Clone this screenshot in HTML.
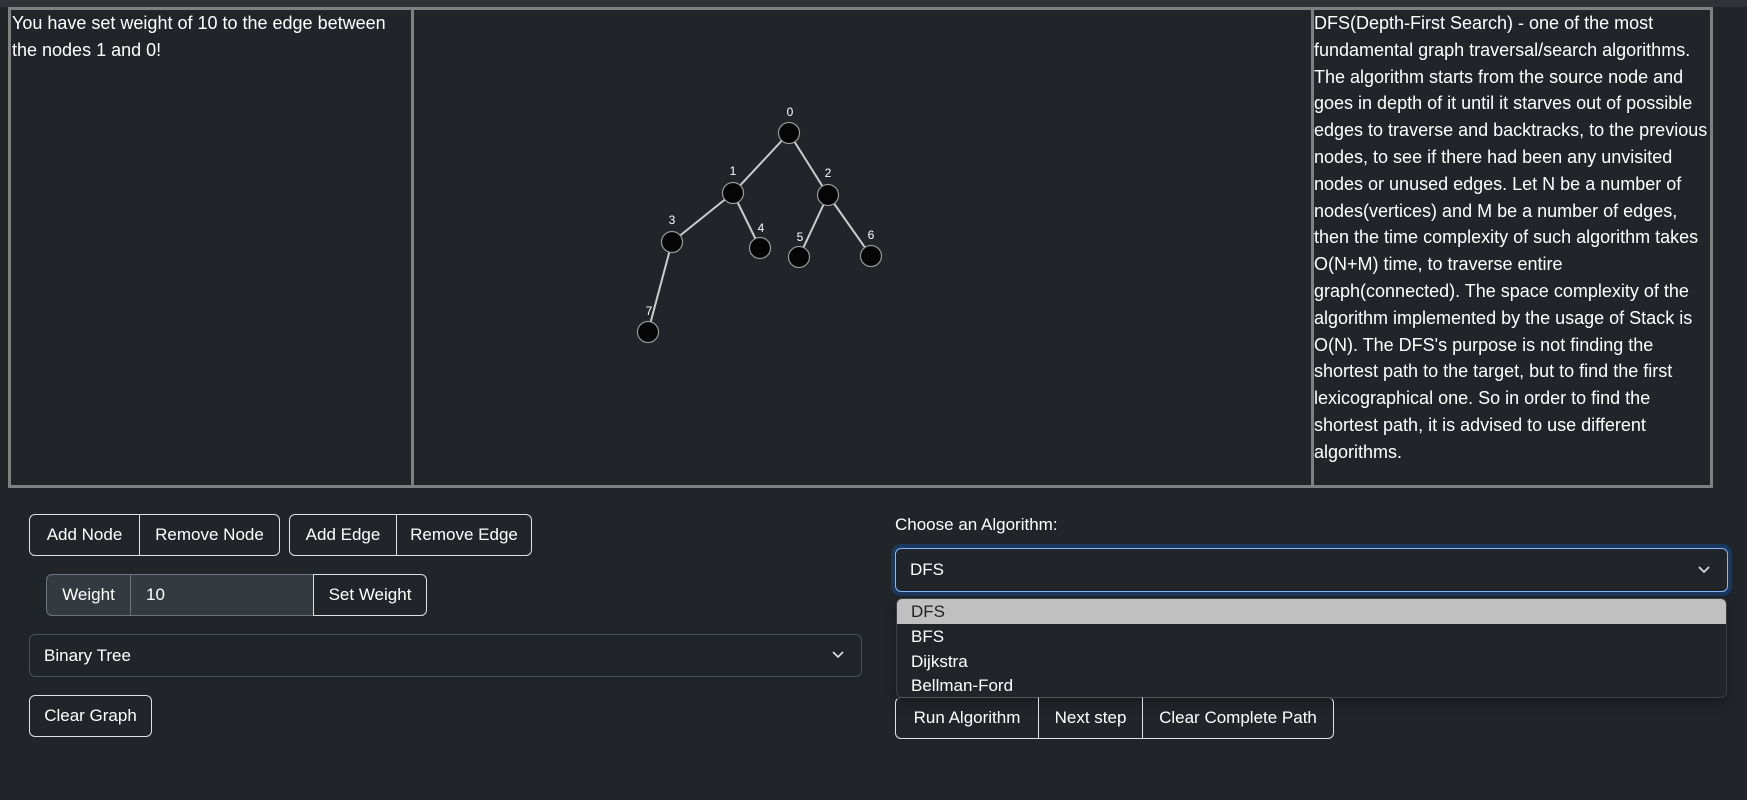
<!DOCTYPE html>
<html><head><meta charset="utf-8"><style>
*{box-sizing:border-box;margin:0;padding:0}
body{width:1747px;height:800px;background:#212529;color:#fff;font-family:"Liberation Sans",sans-serif;font-size:16.5px;position:relative;overflow:hidden}
.top{position:absolute;left:0;top:0;width:1747px;height:7px;background:#2f3338}
.pan{position:absolute;top:7px;height:481px;border:3px solid #808080}
.txt{line-height:26.8px;white-space:nowrap;font-size:18px;letter-spacing:0}
.a{position:absolute}
.btn{position:absolute;border:1px solid #dee2e6;display:flex;align-items:center;justify-content:center;font-size:17px;color:#fff}
.sel{position:absolute;border:1px solid #495057;border-radius:6px;display:flex;align-items:center;padding-left:14px;font-size:17px}
</style></head><body>
<div class="top"></div>
<div class="pan" style="left:8px;width:406px"><div class="txt" style="padding-left:1px;padding-top:0">You have set weight of 10 to the edge between<br>the nodes 1 and 0!</div></div>
<div class="pan" style="left:411px;width:903px">
<svg width="897" height="475" style="position:absolute;left:0;top:0" viewBox="414 10 897 475">
<g stroke="#ccc" stroke-width="2">
<line x1="789" y1="133" x2="733" y2="193"/><line x1="789" y1="133" x2="828" y2="195"/>
<line x1="733" y1="193" x2="672" y2="242"/><line x1="733" y1="193" x2="760" y2="248"/>
<line x1="828" y1="195" x2="799" y2="257"/><line x1="828" y1="195" x2="871" y2="256"/>
<line x1="672" y1="242" x2="648" y2="332"/></g>
<g fill="#050505" stroke="#999" stroke-width="1.2">
<ellipse cx="789" cy="133" rx="10.5" ry="10.5"/><ellipse cx="733" cy="193" rx="10.5" ry="10.5"/><ellipse cx="828" cy="195" rx="10.5" ry="10.5"/>
<ellipse cx="672" cy="242" rx="10.5" ry="10.5"/><ellipse cx="760" cy="248" rx="10.5" ry="10.5"/><ellipse cx="799" cy="257" rx="10.5" ry="10.5"/>
<ellipse cx="871" cy="256" rx="10.5" ry="10.5"/><ellipse cx="648" cy="332" rx="10.5" ry="10.5"/></g>
<g fill="#fff" font-size="12" font-family="Liberation Sans,sans-serif" text-anchor="middle">
<text x="790" y="116">0</text><text x="733" y="175">1</text><text x="828" y="177">2</text><text x="672" y="224">3</text>
<text x="761" y="232">4</text><text x="800" y="241">5</text><text x="871" y="239">6</text><text x="649" y="315">7</text></g>
</svg></div>
<div class="pan" style="left:1311px;width:402px"><div class="txt" style="padding-left:0">DFS(Depth-First Search) - one of the most<br>fundamental graph traversal/search algorithms.<br>The algorithm starts from the source node and<br>goes in depth of it until it starves out of possible<br>edges to traverse and backtracks, to the previous<br>nodes, to see if there had been any unvisited<br>nodes or unused edges. Let N be a number of<br>nodes(vertices) and M be a number of edges,<br>then the time complexity of such algorithm takes<br>O(N+M) time, to traverse entire<br>graph(connected). The space complexity of the<br>algorithm implemented by the usage of Stack is<br>O(N). The DFS's purpose is not finding the<br>shortest path to the target, but to find the first<br>lexicographical one. So in order to find the<br>shortest path, it is advised to use different<br>algorithms.</div></div>

<div class="btn" style="left:29px;top:514px;width:111px;height:42px;border-radius:6px 0 0 6px">Add Node</div>
<div class="btn" style="left:139px;top:514px;width:141px;height:42px;border-radius:0 6px 6px 0">Remove Node</div>
<div class="btn" style="left:289px;top:514px;width:108px;height:42px;border-radius:6px 0 0 6px">Add Edge</div>
<div class="btn" style="left:396px;top:514px;width:136px;height:42px;border-radius:0 6px 6px 0">Remove Edge</div>

<div class="btn" style="left:46px;top:574px;width:85px;height:42px;border-radius:6px 0 0 6px;background:#343a40;border-color:#6c757d">Weight</div>
<div class="a" style="left:130px;top:574px;width:184px;height:42px;background:#343a40;border:1px solid #6c757d;display:flex;align-items:center;padding-left:15px;font-size:17px">10</div>
<div class="btn" style="left:313px;top:574px;width:114px;height:42px;border-radius:0 6px 6px 0">Set Weight</div>

<div class="sel" style="left:29px;top:634px;width:833px;height:43px">Binary Tree<svg class="a" style="right:16px;top:15px" width="14" height="10"><path d="M2 2l5 5 5-5" fill="none" stroke="#dee2e6" stroke-width="1.6"/></svg></div>
<div class="btn" style="left:29px;top:695px;width:123px;height:42px;border-radius:6px">Clear Graph</div>

<div class="a" style="left:895px;top:515px;font-size:17px">Choose an Algorithm:</div>
<div class="sel" style="left:895px;top:548px;width:833px;height:44px;border-color:#86b7fe;box-shadow:0 0 0 4px rgba(13,110,253,.25)">DFS<svg class="a" style="right:16px;top:16px" width="14" height="10"><path d="M2 2l5 5 5-5" fill="none" stroke="#dee2e6" stroke-width="1.6"/></svg></div>
<div class="a" style="left:896px;top:598px;width:831px;height:100px;background:#212529;border:1px solid #3a3f44;border-radius:6px;overflow:hidden;font-size:17px;box-shadow:0 4px 12px rgba(0,0,0,.3)">
<div style="height:25px;background:#c0c0c0;color:#222;padding-left:14px;line-height:25px">DFS</div>
<div style="height:25px;padding-left:14px;line-height:25px">BFS</div>
<div style="height:25px;padding-left:14px;line-height:25px">Dijkstra</div>
<div style="height:24px;padding-left:14px;line-height:24px">Bellman-Ford</div></div>
<div class="btn" style="left:895px;top:697px;width:144px;height:42px;border-radius:6px 0 0 6px;border-top-color:#555">Run Algorithm</div>
<div class="btn" style="left:1038px;top:697px;width:105px;height:42px;border-top-color:#555">Next step</div>
<div class="btn" style="left:1142px;top:697px;width:192px;height:42px;border-radius:0 6px 6px 0;border-top-color:#555">Clear Complete Path</div>
</body></html>
